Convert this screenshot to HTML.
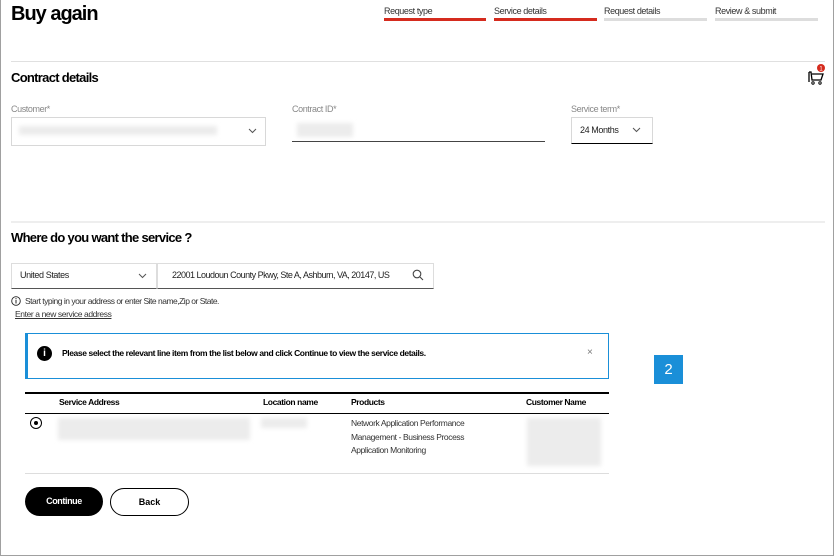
<!DOCTYPE html>
<html><head><style>
*{margin:0;padding:0;box-sizing:border-box}
body{width:835px;height:558px;background:#fff;font-family:"Liberation Sans",sans-serif;color:#000;position:relative;overflow:hidden}
.frame{position:absolute;left:0;top:0;width:834px;height:556px;border:1px solid #a0a0a0;border-top:none}
.a{position:absolute}
.t{letter-spacing:-0.4px;white-space:nowrap}
.blur{position:absolute;background:#ececec;filter:blur(2px)}
</style></head><body>
<div class="frame"></div>
<div class="a t" style="left:11px;top:3px;font-size:20px;font-weight:bold;letter-spacing:-1px">Buy again</div>
<div class="a t" style="left:384px;top:6px;font-size:9px;color:#333">Request type</div>
<div class="a" style="left:384px;top:18px;width:102px;height:3px;background:#d52b1e"></div>
<div class="a t" style="left:494px;top:6px;font-size:9px;color:#333">Service details</div>
<div class="a" style="left:494px;top:18px;width:103px;height:3px;background:#d52b1e"></div>
<div class="a t" style="left:604px;top:6px;font-size:9px;color:#333">Request details</div>
<div class="a" style="left:604px;top:18px;width:103px;height:3px;background:#ddd"></div>
<div class="a t" style="left:715px;top:6px;font-size:9px;color:#333">Review &amp; submit</div>
<div class="a" style="left:715px;top:18px;width:103px;height:3px;background:#ddd"></div>
<div class="a" style="left:11px;top:61px;width:814px;height:1px;background:#e0e0e0"></div>
<div class="a t" style="left:11px;top:70px;font-size:13px;font-weight:bold;letter-spacing:-0.7px">Contract details</div>
<svg class="a" style="left:806px;top:63px" width="22" height="24" viewBox="0 0 22 24"><path d="M3 9v10M3 9h2l1 8h9l2-6H6" fill="none" stroke="#000" stroke-width="1.3"/><circle cx="7" cy="20" r="1.2" fill="none" stroke="#000"/><circle cx="14" cy="20" r="1.2" fill="none" stroke="#000"/><circle cx="15" cy="5" r="4" fill="#d52b1e"/><text x="15" y="7.5" font-size="6" fill="#fff" text-anchor="middle" font-family="Liberation Sans">1</text></svg>
<div class="a t" style="left:11px;top:104px;font-size:9px;color:#888">Customer*</div>
<div class="a" style="left:11px;top:117px;width:255px;height:29px;border:1px solid #d8d8d8"></div>
<div class="blur" style="left:19px;top:126px;width:198px;height:9px"></div>
<svg class="a" style="left:248px;top:128px" width="9" height="6"><path d="M1 1l3.5 3.5L8 1" fill="none" stroke="#555"/></svg>
<div class="a t" style="left:292px;top:104px;font-size:9px;color:#888">Contract ID*</div>
<div class="blur" style="left:297px;top:123px;width:56px;height:14px"></div>
<div class="a" style="left:292px;top:141px;width:253px;height:1px;background:#444"></div>
<div class="a t" style="left:571px;top:104px;font-size:9px;color:#888">Service term*</div>
<div class="a" style="left:571px;top:117px;width:82px;height:27px;border:1px solid #d8d8d8;border-bottom:1px solid #000"></div>
<div class="a t" style="left:580px;top:125px;font-size:9px;color:#222">24 Months</div>
<svg class="a" style="left:632px;top:127px" width="9" height="6"><path d="M1 1l3.5 3.5L8 1" fill="none" stroke="#555"/></svg>
<div class="a" style="left:11px;top:221px;width:814px;height:2px;background:#eee"></div>
<div class="a t" style="left:11px;top:230px;font-size:13px;font-weight:bold;letter-spacing:-0.7px">Where do you want the service ?</div>
<div class="a" style="left:11px;top:263px;width:146px;height:26px;border:1px solid #ddd;border-bottom:1px solid #555"></div>
<div class="a t" style="left:20px;top:270px;font-size:9px;color:#222">United States</div>
<svg class="a" style="left:138px;top:273px" width="9" height="6"><path d="M1 1l3.5 3.5L8 1" fill="none" stroke="#555"/></svg>
<div class="a" style="left:157px;top:263px;width:277px;height:26px;border:1px solid #ddd;border-bottom:1px solid #555"></div>
<div class="a t" style="left:172px;top:270px;font-size:9px;color:#222;letter-spacing:-0.5px">22001 Loudoun County Pkwy, Ste A, Ashburn, VA, 20147, US</div>
<svg class="a" style="left:412px;top:269px" width="12" height="12"><circle cx="5" cy="5" r="3.8" fill="none" stroke="#444" stroke-width="1.1"/><path d="M8 8l3 3" stroke="#444" stroke-width="1.1"/></svg>
<svg class="a" style="left:11px;top:296px" width="10" height="10"><circle cx="5" cy="5" r="4.3" fill="none" stroke="#222" stroke-width=".9"/><path d="M5 4v3.5" stroke="#222"/><circle cx="5" cy="2.7" r=".6" fill="#222"/></svg>
<div class="a t" style="left:25px;top:296px;font-size:8.5px;color:#333;letter-spacing:-0.5px">Start typing in your address or enter Site name,Zip or State.</div>
<div class="a t" style="left:15px;top:309px;font-size:8.5px;color:#333;text-decoration:underline;letter-spacing:-0.4px">Enter a new service address</div>
<div class="a" style="left:25px;top:333px;width:584px;height:46px;border:1px solid #1a8fd8;border-left:3px solid #1a8fd8"></div>
<div class="a" style="left:37px;top:346px;width:15px;height:15px;border-radius:50%;background:#000;color:#fff;font-size:10px;font-weight:bold;text-align:center;line-height:15px">i</div>
<div class="a t" style="left:62px;top:348px;font-size:8.5px;font-weight:bold;letter-spacing:-0.4px">Please select the relevant line item from the list below and click Continue to view the service details.</div>
<div class="a" style="left:587px;top:347px;font-size:10px;color:#777">×</div>
<div class="a" style="left:654px;top:355px;width:29px;height:29px;background:#1a8fd8;color:#fff;font-size:15px;text-align:center;line-height:29px">2</div>
<div class="a" style="left:25px;top:392px;width:584px;height:2px;background:#000"></div>
<div class="a t" style="left:59px;top:397px;font-size:8.5px;font-weight:bold">Service Address</div>
<div class="a t" style="left:263px;top:397px;font-size:8.5px;font-weight:bold">Location name</div>
<div class="a t" style="left:351px;top:397px;font-size:8.5px;font-weight:bold">Products</div>
<div class="a t" style="left:526px;top:397px;font-size:8.5px;font-weight:bold">Customer Name</div>
<div class="a" style="left:25px;top:413px;width:584px;height:1px;background:#000"></div>
<div class="a" style="left:30px;top:417px;width:12px;height:12px;border:1px solid #000;border-radius:50%"></div>
<div class="a" style="left:34px;top:421px;width:4px;height:4px;background:#000;border-radius:50%"></div>
<div class="blur" style="left:58px;top:418px;width:192px;height:22px"></div>
<div class="blur" style="left:261px;top:418px;width:46px;height:10px"></div>
<div class="a" style="left:351px;top:417px;font-size:8.5px;color:#333;line-height:13.5px;letter-spacing:-0.4px">Network Application Performance<br>Management - Business Process<br>Application Monitoring</div>
<div class="blur" style="left:527px;top:418px;width:74px;height:48px"></div>
<div class="a" style="left:25px;top:473px;width:584px;height:1px;background:#ddd"></div>
<div class="a" style="left:25px;top:487px;width:78px;height:29px;background:#000;border-radius:15px;color:#fff;font-size:9px;font-weight:bold;text-align:center;line-height:29px;letter-spacing:-0.4px">Continue</div>
<div class="a" style="left:110px;top:488px;width:79px;height:28px;border:1px solid #000;border-radius:15px;font-size:9px;font-weight:bold;text-align:center;line-height:26px">Back</div>
</body></html>
